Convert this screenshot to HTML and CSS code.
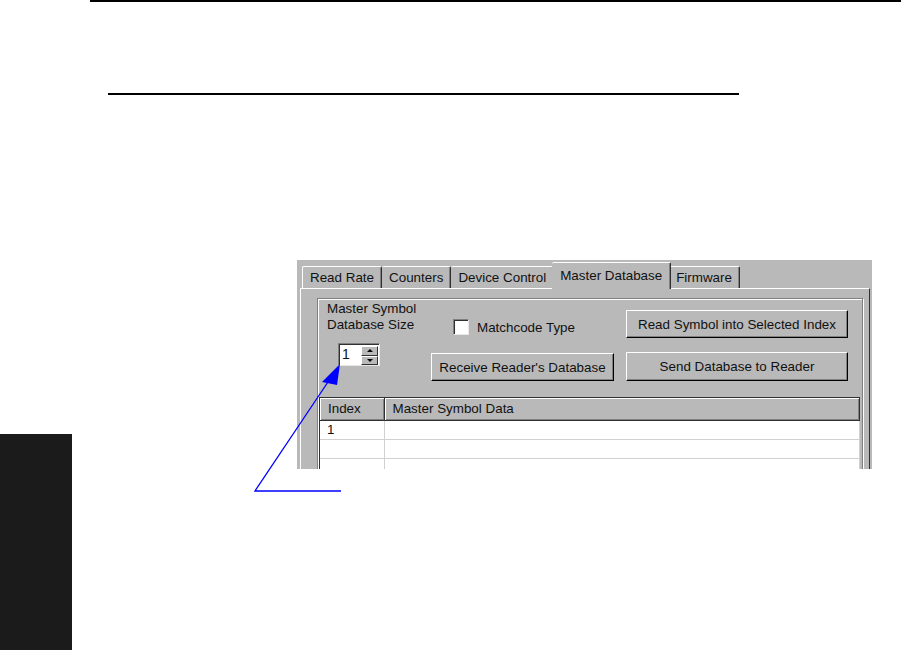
FILE: index.html
```html
<!DOCTYPE html>
<html lang="en">
<head>
    <meta charset="UTF-8">
    <title>Master Database</title>
    <link rel="stylesheet" href="styles.css">
</head>
<body>
    <div class="page">
        <div class="header-rule"></div>
        <div class="title-rule"></div>

        <div class="figure">
            <div class="tabs">
                <div class="tab">Read Rate</div>
                <div class="tab">Counters</div>
                <div class="tab">Device Control</div>
                <div class="tab active">Master Database</div>
                <div class="tab">Firmware</div>
            </div>
            <div class="panel">
                <div class="group">
                    <div class="group-controls">
                        <div class="col-size">
                            <div class="size-label">Master Symbol<br>Database Size</div>
                            <div class="spinner">
                                <span class="spin-value">1</span>
                                <span class="spin-btns">
                                    <span class="spin-btn up"></span>
                                    <span class="spin-btn down"></span>
                                </span>
                            </div>
                        </div>
                        <div class="col-mid">
                            <div class="check"><span class="check-box"></span>Matchcode Type</div>
                            <button class="btn btn-receive">Receive Reader's Database</button>
                        </div>
                        <div class="col-right">
                            <button class="btn btn-read">Read Symbol into Selected Index</button>
                            <button class="btn btn-send">Send Database to Reader</button>
                        </div>
                    </div>
                    <div class="grid-wrap">
                        <table class="grid">
                            <thead>
                                <tr>
                                    <th class="col-index">Index</th>
                                    <th>Master Symbol Data</th>
                                </tr>
                            </thead>
                            <tbody>
                                <tr><td>1</td><td></td></tr>
                                <tr><td></td><td></td></tr>
                                <tr><td></td><td></td></tr>
                            </tbody>
                        </table>
                    </div>
                </div>
            </div>
        </div>

        <div class="side-tab"></div>

        <!-- callout pointing at the size spinner -->
        <svg class="callout" width="100" height="140" viewBox="0 0 100 140">
            <polyline points="91,133 5,133 84,15" fill="none" stroke="#0000ff" stroke-width="1.3"/>
            <polygon points="90,6 72,24 87,27" fill="#0000ff"/>
        </svg>
    </div>
</body>
</html>
```

FILE: styles.css
```css
body {
    margin: 0;
    background-color: #fff;
    font-family: "Liberation Sans", Arial, sans-serif;
}
.page {
    position: relative;
    width: 901px;
    height: 650px;
    overflow: hidden;
}
.header-rule {
    margin-left: 90px;
    border-top: 2px solid #000;
}
.title-rule {
    margin: 91px 0 0 108px;
    width: 631px;
    border-top: 2px solid #000;
}

/* screenshot of the dialog */
.figure {
    margin: 165px 0 0 297px;
    width: 575px;
    height: 209px;
    background-color: #b9b9b9;
    overflow: hidden;
    font-size: 13.4px;
    color: #111;
}
.tabs {
    display: flex;
    align-items: flex-end;
    height: 26px;
    padding: 2px 0 0 5px;
}
.tab {
    box-sizing: border-box;
    height: 22px;
    padding: 0 7px;
    display: flex;
    align-items: center;
    border-top: 1px solid #fff;
    border-left: 1px solid #fff;
    border-right: 1px solid #303030;
    border-radius: 2px 2px 0 0;
    box-shadow: inset -1px 0 0 #808080;
    background-color: #b9b9b9;
}
.tab.active {
    position: relative;
    z-index: 1;
    height: 27px;
    margin: 0 -2px -1px;
    padding: 0 8px 2px;
}
.tab + .tab {
    border-left: none;
}
.panel {
    box-sizing: border-box;
    width: 570px;
    height: 181px;
    margin-left: 3px;
    padding: 9px 0 0 16px;
    border-top: 1px solid #fff;
    border-left: 1px solid #fff;
    border-right: 1px solid #303030;
}
.group {
    box-sizing: border-box;
    width: 546px;
    height: 200px;
    border: 1px solid #7f7f7f;
    box-shadow: inset 1px 1px 0 #fff, 1px 1px 0 #fff;
}
.group-controls {
    box-sizing: border-box;
    display: flex;
    height: 97px;
    padding: 2px 0 0 9px;
}
.col-size {
    width: 104px;
}
.size-label {
    line-height: 16px;
}
.spinner {
    display: flex;
    box-sizing: border-box;
    width: 42px;
    height: 23px;
    margin: 10px 0 0 11px;
    padding: 1px 1px 0 2px;
    background-color: #fff;
    border: 1px solid;
    border-color: #808080 #e8e8e8 #e8e8e8 #808080;
    box-shadow: inset 1px 1px 0 #303030;
}
.spin-value {
    flex: 1;
    line-height: 19px;
    padding-left: 1px;
    font-size: 14px;
}
.spin-btns {
    display: flex;
    flex-direction: column;
    width: 17px;
    margin-top: 1px;
}
.spin-btn {
    position: relative;
    box-sizing: border-box;
    height: 10px;
    background-color: #b9b9b9;
    border: 1px solid;
    border-color: #fff #303030 #303030 #fff;
}
.spin-btn::after {
    content: "";
    position: absolute;
    left: 5px;
    top: 2px;
    border-left: 3px solid transparent;
    border-right: 3px solid transparent;
}
.spin-btn.up::after {
    border-bottom: 3px solid #000;
}
.spin-btn.down::after {
    border-top: 3px solid #000;
}
.col-mid {
    width: 183px;
}
.check {
    display: flex;
    align-items: center;
    height: 16px;
    margin: 18px 0 0 22px;
}
.check-box {
    box-sizing: border-box;
    width: 16px;
    height: 16px;
    margin-right: 8px;
    background-color: #fff;
    border: 1px solid;
    border-color: #808080 #e8e8e8 #e8e8e8 #808080;
    box-shadow: inset 1px 1px 0 #303030;
}
.btn {
    display: block;
    box-sizing: border-box;
    padding: 0;
    font-family: inherit;
    font-size: 13.4px;
    color: #111;
    text-align: center;
    background-color: #b9b9b9;
    border: 1px solid;
    border-color: #fff #000 #000 #fff;
    box-shadow: inset -1px -1px 0 #808080;
}
.btn-receive {
    width: 183px;
    height: 28px;
    margin-top: 18px;
}
.col-right {
    width: 222px;
    margin-left: 12px;
}
.btn-read {
    width: 222px;
    height: 28px;
    margin-top: 9px;
}
.btn-send {
    width: 222px;
    height: 29px;
    margin-top: 14px;
}
.grid-wrap {
    width: 540px;
    margin: 1px 0 0 1px;
    background-color: #fff;
    border-top: 1px solid #303030;
    border-left: 1px solid #303030;
}
.grid {
    width: 100%;
    border-collapse: collapse;
    font-size: 13.4px;
}
.grid th {
    box-sizing: border-box;
    height: 22px;
    padding: 0 0 0 8px;
    text-align: left;
    font-weight: normal;
    background-color: #b9b9b9;
    border-right: 1px solid #303030;
    border-bottom: 1px solid #303030;
    box-shadow: inset 1px 1px 0 #fff, inset -1px -1px 0 #808080;
}
.grid .col-index {
    width: 64px;
}
.grid td {
    height: 18px;
    padding: 0 0 0 7px;
    border-right: 1px solid #d0d0d0;
    border-bottom: 1px solid #d0d0d0;
}

/* black thumb index at the page edge */
.side-tab {
    position: absolute;
    left: 0;
    top: 434px;
    width: 72px;
    height: 216px;
    background-color: #1b1b1b;
}
.callout {
    position: absolute;
    left: 250px;
    top: 358px;
}
```
